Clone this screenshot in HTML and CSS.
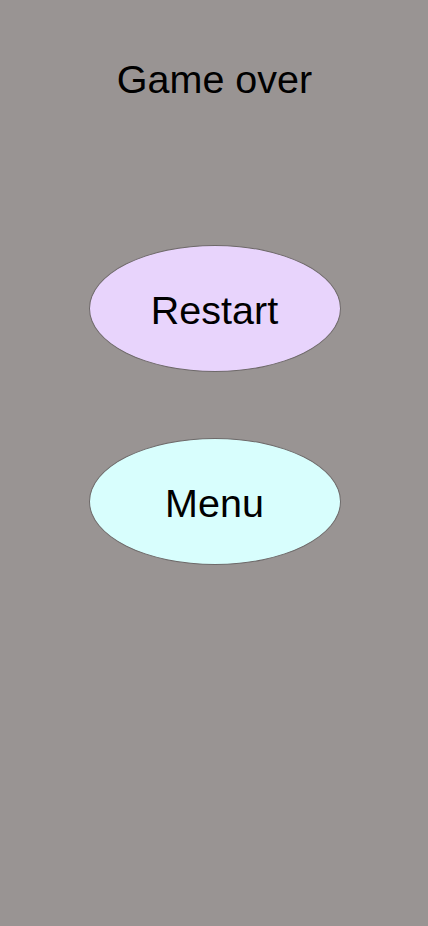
FILE: index.html
```html
<!DOCTYPE html>
<html lang="en">
<head>
  <meta charset="UTF-8" />
  <title>Game over</title>
  <meta name="viewport" content="width=device-width, initial-scale=1" />
  <link rel="stylesheet" href="styles.css">
</head>
<body>
  <div class="screen">
    <h1 class="title">Game over</h1>
    <div class="buttons">
      <button class="oval restart">Restart</button>
      <button class="oval menu">Menu</button>
    </div>
  </div>
</body>
</html>
```

FILE: styles.css
```css
body {
  margin: 0;
  font-family: "Liberation Sans", Arial, sans-serif;
  background-color: #999493;
}

.screen {
  display: flex;
  flex-direction: column;
  align-items: center;
  min-height: 100vh;
  padding-top: 57px;
  box-sizing: border-box;
}

.title {
  margin: 0 0 0 1px;
  font-size: 39.5px;
  font-weight: normal;
  color: #000;
  line-height: 45px;
}

.buttons {
  display: flex;
  flex-direction: column;
  align-items: center;
  gap: 66px;
  margin-top: 143px;
  margin-left: 1px;
}

.oval {
  display: flex;
  justify-content: center;
  align-items: center;
  width: 252px;
  height: 127px;
  box-sizing: border-box;
  border: 1px solid #6e6969;
  border-radius: 50%;
  font-family: "Liberation Sans", Arial, sans-serif;
  font-size: 39.5px;
  color: #000;
  padding: 3px 0 0;
  cursor: pointer;
}

.restart {
  background-color: #e8d4fc;
}

.menu {
  background-color: #d8fefd;
}
```
